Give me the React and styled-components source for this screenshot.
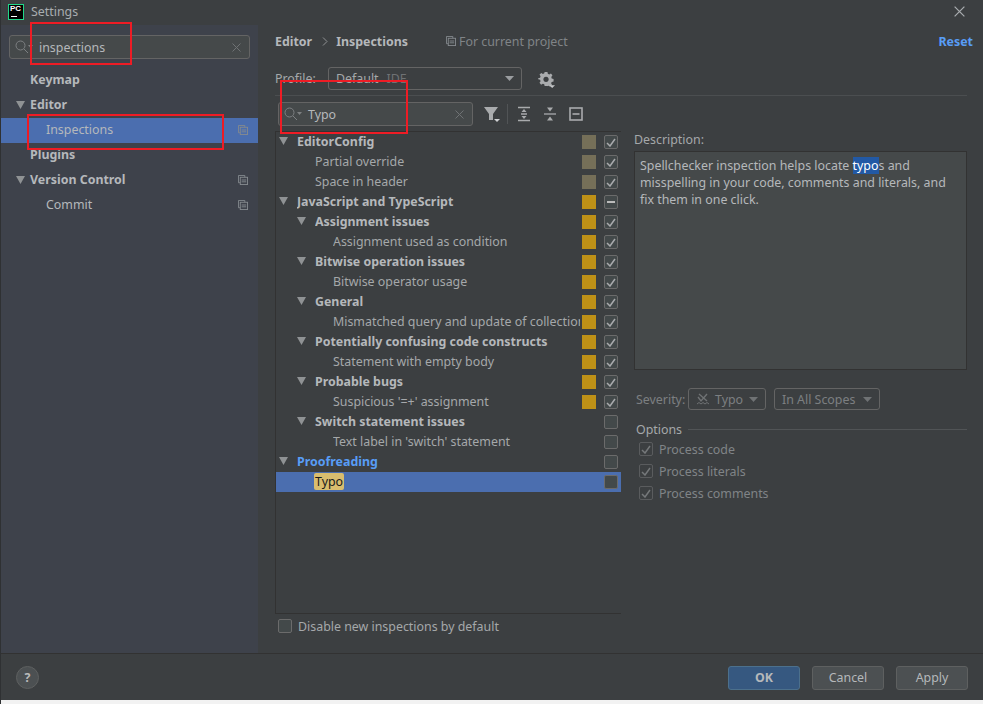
import React from 'react';
import styled, { createGlobalStyle } from 'styled-components';

const GlobalStyle = createGlobalStyle`
  html, body { margin: 0; padding: 0; background: #f2f2f2; }
  body { font-family: "Noto Sans", "Open Sans", sans-serif; font-size: 12.4px; color: #bbbbbb; }
  * { box-sizing: border-box; }
`;

const Window = styled.div`
  position: relative;
  width: 983px;
  height: 704px;
  overflow: hidden;
  display: flex;
  flex-direction: column;
  background: #f2f2f2;
  border-left: 1px solid #2f3133;
`;

const TitleBar = styled.div`
  height: 25px;
  flex: none;
  display: flex;
  align-items: center;
  padding: 0 18px 2px 7px;
  background: #3c3f41;
  color: #a9adb0;
`;

const Logo = styled.div`
  width: 16px;
  height: 16px;
  margin-right: 7px;
  background: #000;
  border: 1px solid #21d789;
  color: #fff;
  font: bold 8px/8px "Liberation Sans", sans-serif;
  padding-left: 1px;
  position: relative;
  &::after {
    content: '';
    position: absolute;
    left: 2px;
    bottom: 2px;
    width: 6px;
    height: 1px;
    background: #fff;
  }
`;

const TitleText = styled.span`
  flex: 1;
  padding-bottom: 1px;
`;

const Body = styled.div`
  height: 628px;
  flex: none;
  display: flex;
`;

const Sidebar = styled.div`
  width: 257px;
  flex: none;
  background: #3e424b;
  padding-top: 10px;
`;

const SearchBox = styled.div`
  height: 24px;
  display: flex;
  align-items: center;
  padding: 0 8px 0 5px;
  background: #45494a;
  border: 1px solid #646464;
  border-radius: 3px;
  width: ${p => p.$width}px;
  margin-left: ${p => p.$left}px;
`;

const SearchText = styled.span`
  flex: 1;
  margin-left: ${p => p.$gap}px;
  color: #b5b8bb;
`;

const NavList = styled.div`
  margin-top: 8.5px;
`;

const NavRow = styled.div`
  height: 25px;
  display: flex;
  align-items: center;
  padding-right: 10px;
  padding-left: ${p => 29 + p.$level * 16}px;
  position: relative;
  background: ${p => (p.$selected ? '#4b6eaf' : 'transparent')};
  font-weight: ${p => (p.$bold ? 700 : 400)};
  color: #b5b8bb;
`;

const NavLabel = styled.span`
  flex: 1;
  padding-bottom: 2px;
`;

const NavArrow = styled.svg`
  position: absolute;
  left: 15px;
  top: 8px;
  width: 9px;
  height: 8px;
`;

const Main = styled.div`
  flex: 1;
  min-width: 0;
  background: #3c3f41;
  padding: 4px 16px 0 17px;
  display: flex;
  flex-direction: column;
`;

const CrumbRow = styled.div`
  height: 24px;
  display: flex;
  align-items: center;
  margin-right: -6px;
`;

const Crumb = styled.span`
  font-weight: 700;
  color: #b5b8bb;
`;

const CrumbSep = styled.svg`
  width: 6px;
  height: 9px;
  margin: 0 8px 0 10px;
`;

const ProjectNote = styled.span`
  display: flex;
  align-items: center;
  gap: 3px;
  margin-left: 38px;
  color: #808487;
`;

const ResetLink = styled.span`
  margin-left: auto;
  font-weight: 700;
  color: #589df6;
`;

const ProfileRow = styled.div`
  margin-top: 14px;
  height: 29px;
  padding-bottom: 6px;
  display: flex;
  align-items: center;
  border-bottom: 1px solid #4b4e50;
`;

const ProfileLabel = styled.span`
  width: 53px;
  color: #a5a8aa;
`;

const Combo = styled.div`
  display: flex;
  align-items: center;
  justify-content: space-between;
  border: 1px solid #646464;
  border-radius: 3px;
  height: ${p => p.$height}px;
  width: ${p => p.$width}px;
  margin-left: ${p => p.$left || 0}px;
  padding: 0 7px;
  color: ${p => (p.$muted ? '#7c7f81' : '#a5a8aa')};
`;

const ComboValue = styled.span`
  display: flex;
  align-items: center;
  gap: 4px;
`;

const ComboHint = styled.span`
  color: #6f7274;
  margin-left: 4px;
`;

const GearIcon = styled.svg`
  width: 17px;
  height: 17px;
  margin-left: 16px;
  margin-top: 2px;
`;

const FilterRow = styled.div`
  margin-top: 6px;
  height: 24px;
  display: flex;
  align-items: center;
`;

const ToolIcon = styled.svg`
  width: 16px;
  height: 16px;
  flex: none;
  margin-left: ${p => p.$left}px;
`;

const ToolSep = styled.div`
  width: 1px;
  height: 20px;
  background: #515456;
  margin-left: 7px;
`;

const Split = styled.div`
  margin-top: 5px;
  height: 483px;
  display: flex;
  gap: 13px;
`;

const TreeBox = styled.div`
  width: 346px;
  flex: none;
  border: 1px solid #323232;
  border-right-width: 0;
`;

const TreeRow = styled.div`
  height: 20px;
  display: flex;
  align-items: center;
  position: relative;
  padding-right: 3px;
  padding-left: ${p => (p.$selected ? 20 : 21) + p.$level * 18}px;
  background: ${p => (p.$selected ? '#4b6eaf' : 'transparent')};
`;

const TreeArrow = styled.svg`
  position: absolute;
  left: ${p => 3 + p.$level * 18}px;
  top: 5px;
  width: 9px;
  height: 8px;
`;

const TreeLabel = styled.span`
  flex: 1;
  min-width: 0;
  margin-right: 2px;
  overflow: hidden;
  white-space: nowrap;
  padding-bottom: 2px;
  font-weight: ${p => (p.$bold ? 700 : 400)};
  color: ${p => (p.$blue ? '#589df6' : p.$bold ? '#b5b8bb' : '#a5a8aa')};
`;

const Match = styled.span`
  background: #d9bd6e;
  color: #1a1a1a;
  border-radius: 2px;
  padding: 0 1px;
`;

const Swatch = styled.span`
  width: 14px;
  height: 14px;
  flex: none;
  margin-right: 8px;
  background: ${p => p.$color};
`;

const CheckBox = styled.span`
  width: 14px;
  height: 14px;
  flex: none;
  display: flex;
  align-items: center;
  justify-content: center;
  border: 1px solid #6b6b6b;
  border-radius: 2px;
  background: #43494a;
`;

const DescPane = styled.div`
  flex: 1;
  min-width: 0;
  display: flex;
  flex-direction: column;
`;

const DescLabel = styled.div`
  height: 20px;
  line-height: 18px;
  color: #a5a8aa;
`;

const DescBox = styled.div`
  height: 219px;
  padding: 5px 15px 6px 5px;
  background: #45494a;
  border: 1px solid #323232;
  line-height: 17px;
  color: #b5b8bb;
`;

const Hit = styled.span`
  background: #2259a5;
  color: #fff;
`;

const SeverityRow = styled.div`
  margin-top: 18px;
  display: flex;
  align-items: center;
  color: #7c7f81;
  padding-left: 2px;
`;

const SeverityLabel = styled.span`
  width: 52px;
`;

const OptionsTitle = styled.div`
  margin-top: 10px;
  height: 18px;
  padding-top: 1px;
  display: flex;
  align-items: center;
  gap: 6px;
  padding-left: 2px;
  color: #a5a8aa;
  &::after {
    content: '';
    flex: 1;
    height: 1px;
    background: #515456;
  }
`;

const OptionRow = styled.div`
  height: 22px;
  display: flex;
  align-items: center;
  gap: 6px;
  padding-left: 5px;
  color: #808487;
`;

const FadedBox = styled(CheckBox)`
  background: transparent;
  border-color: #5a5c5e;
`;

const DisableRow = styled.div`
  margin-top: 4px;
  height: 16px;
  display: flex;
  align-items: center;
  gap: 6px;
  padding-left: 3px;
  color: #a5a8aa;
`;

const Footer = styled.div`
  height: 47px;
  flex: none;
  display: flex;
  align-items: center;
  gap: 12px;
  padding: 1px 15px 0;
  background: #3c3f41;
  border-top: 1px solid #323232;
`;

const HelpButton = styled.div`
  width: 23px;
  height: 23px;
  margin-right: auto;
  border-radius: 50%;
  display: flex;
  align-items: center;
  justify-content: center;
  background: #4c5052;
  border: 1px solid #5e6060;
  color: #bbbbbb;
  font-weight: 700;
`;

const FooterButton = styled.button`
  width: 72px;
  height: 24px;
  padding: 0;
  font: inherit;
  font-weight: ${p => (p.$primary ? 700 : 400)};
  color: #b5b8bb;
  border-radius: 3px;
  background: ${p => (p.$primary ? '#365880' : '#4c5052')};
  border: 1px solid ${p => (p.$primary ? '#4c708c' : '#5e6060')};
`;

const RedMark = styled.div`
  position: absolute;
  left: ${p => p.$x}px;
  top: ${p => p.$y}px;
  width: ${p => p.$w}px;
  height: ${p => p.$h}px;
  border: 2px solid #ee1c25;
  pointer-events: none;
`;

const DownArrow = ({ Comp = TreeArrow, level }) => (
  <Comp $level={level} viewBox="0 0 9 8">
    <path d="M0 0h9L4.5 8z" fill="#8f9294" />
  </Comp>
);

const Caret = ({ color = '#9a9da0' }) => (
  <svg width="9" height="5" viewBox="0 0 9 5">
    <path d="M0 0h9L4.5 5z" fill={color} />
  </svg>
);

const Tick = ({ color = '#a9abad' }) => (
  <svg width="10" height="9" viewBox="0 0 10 9">
    <path d="M1 5l3 3 5-7" fill="none" stroke={color} strokeWidth="1.5" />
  </svg>
);

const CopyIcon = () => (
  <svg width="10" height="10" viewBox="0 0 11 11" fill="none" stroke="#858a8e">
    <path d="M2.5 8.5h-2v-8h7v2" />
    <rect x="2.5" y="2.5" width="8" height="8" />
    <path d="M4 5.5h5M4 7.5h5" />
  </svg>
);

const SearchGlyph = () => (
  <svg width="18" height="14" viewBox="0 0 18 14" fill="none" stroke="#7d8082">
    <circle cx="5.5" cy="5.5" r="4.5" />
    <path d="M9 9l4 4" />
    <path d="M13 5h5l-2.5 3z" fill="#7d8082" stroke="none" />
  </svg>
);

const CloseGlyph = ({ size = 9, color = '#6f7274' }) => (
  <svg width={size} height={size} viewBox="0 0 9 9" stroke={color} fill="none">
    <path d="M0.5 0.5l8 8M8.5 0.5l-8 8" />
  </svg>
);

const navItems = [
  { label: 'Keymap', level: 0, bold: true },
  { label: 'Editor', level: 0, bold: true, open: true },
  { label: 'Inspections', level: 1, selected: true, copy: true },
  { label: 'Plugins', level: 0, bold: true },
  { label: 'Version Control', level: 0, bold: true, open: true, copy: true },
  { label: 'Commit', level: 1, copy: true },
];

const OLIVE = '#756f58';
const AMBER = '#be9117';

const treeItems = [
  { label: 'EditorConfig', level: 0, bold: true, swatch: OLIVE, check: 'on' },
  { label: 'Partial override', level: 1, swatch: OLIVE, check: 'on', leaf: true },
  { label: 'Space in header', level: 1, swatch: OLIVE, check: 'on', leaf: true },
  { label: 'JavaScript and TypeScript', level: 0, bold: true, swatch: AMBER, check: 'mixed' },
  { label: 'Assignment issues', level: 1, bold: true, swatch: AMBER, check: 'on' },
  { label: 'Assignment used as condition', level: 2, swatch: AMBER, check: 'on', leaf: true },
  { label: 'Bitwise operation issues', level: 1, bold: true, swatch: AMBER, check: 'on' },
  { label: 'Bitwise operator usage', level: 2, swatch: AMBER, check: 'on', leaf: true },
  { label: 'General', level: 1, bold: true, swatch: AMBER, check: 'on' },
  { label: 'Mismatched query and update of collections', level: 2, swatch: AMBER, check: 'on', leaf: true },
  { label: 'Potentially confusing code constructs', level: 1, bold: true, swatch: AMBER, check: 'on' },
  { label: 'Statement with empty body', level: 2, swatch: AMBER, check: 'on', leaf: true },
  { label: 'Probable bugs', level: 1, bold: true, swatch: AMBER, check: 'on' },
  { label: "Suspicious '=+' assignment", level: 2, swatch: AMBER, check: 'on', leaf: true },
  { label: 'Switch statement issues', level: 1, bold: true },
  { label: "Text label in 'switch' statement", level: 2, leaf: true },
  { label: 'Proofreading', level: 0, bold: true, blue: true },
  { label: 'Typo', level: 1, leaf: true, selected: true },
];

const options = ['Process code', 'Process literals', 'Process comments'];

export default function App() {
  return (
    <Window>
      <GlobalStyle />
      <TitleBar>
        <Logo>PC</Logo>
        <TitleText>Settings</TitleText>
        <CloseGlyph size={11} color="#a9adb0" />
      </TitleBar>

      <Body>
        <Sidebar>
          <SearchBox $width={241} $left={8}>
            <SearchGlyph />
            <SearchText $gap={6}>inspections</SearchText>
            <CloseGlyph />
          </SearchBox>
          <NavList>
            {navItems.map(item => (
              <NavRow key={item.label} $level={item.level} $bold={item.bold} $selected={item.selected}>
                {item.open && <DownArrow Comp={NavArrow} />}
                <NavLabel>{item.label}</NavLabel>
                {item.copy && <CopyIcon />}
              </NavRow>
            ))}
          </NavList>
        </Sidebar>

        <Main>
          <CrumbRow>
            <Crumb>Editor</Crumb>
            <CrumbSep viewBox="0 0 6 9">
              <path d="M1 0.5l4 4-4 4" fill="none" stroke="#8f9294" />
            </CrumbSep>
            <Crumb>Inspections</Crumb>
            <ProjectNote>
              <CopyIcon />
              For current project
            </ProjectNote>
            <ResetLink>Reset</ResetLink>
          </CrumbRow>

          <ProfileRow>
            <ProfileLabel>Profile:</ProfileLabel>
            <Combo $width={194} $height={23}>
              <ComboValue>
                Default<ComboHint>IDE</ComboHint>
              </ComboValue>
              <Caret />
            </Combo>
            <GearIcon viewBox="0 0 18 18">
              <path
                d="M7 1h3l.4 2 1.5.7 1.8-1.1 1.6 2-1.2 1.7.4 1.6 2 .6v2.6l-2 .5-.6 1.5 1 1.800-2 1.800-1.700-1.100-1.500.5L10 16H7l-.4-2-1.500-.6-1.800 1.100-1.700-2 1.100-1.700-.5-1.500-2-.5V7.700l2-.6.5-1.500-1.100-1.800 1.900-1.800 1.700 1.100 1.500-.6z M8.500 6a2.800 2.800 0 1 0 0.010 0z"
                fill="#a9abad"
                fillRule="evenodd"
              />
              <path d="M12 15h6l-3 3z" fill="#c5c7c9" />
            </GearIcon>
          </ProfileRow>

          <FilterRow>
            <SearchBox $width={195} $left={3}>
              <SearchGlyph />
              <SearchText $gap={6}>Typo</SearchText>
              <CloseGlyph />
            </SearchBox>
            <ToolIcon $left={11} viewBox="0 0 16 16">
              <path d="M0 1h14L9 8v6l-4 0V8z" fill="#a9abad" />
              <path d="M10 13h6l-3 3z" fill="#d0d2d4" />
            </ToolIcon>
            <ToolSep />
            <ToolIcon $left={8} viewBox="0 0 16 16" fill="none" stroke="#a9abad" strokeWidth="1.3">
              <path d="M2 1.500h12M2 14.500h12M5 8h6" />
              <path d="M8 3l2.500 3h-5zM8 13l2.500-3h-5z" fill="#a9abad" stroke="none" />
            </ToolIcon>
            <ToolIcon $left={10} viewBox="0 0 16 16" fill="none" stroke="#a9abad" strokeWidth="1.3">
              <path d="M2 8h12" />
              <path d="M5 1.500h6l-3 4zM5 14.500h6l-3-4z" fill="#a9abad" stroke="none" />
            </ToolIcon>
            <ToolIcon $left={10} viewBox="0 0 16 16" fill="none" stroke="#a9abad" strokeWidth="1.6">
              <rect x="2" y="2" width="12" height="12" />
              <path d="M4.500 8h7" />
            </ToolIcon>
          </FilterRow>

          <Split>
            <TreeBox>
              {treeItems.map(item => (
                <TreeRow key={item.label} $level={item.level} $selected={item.selected}>
                  {!item.leaf && <DownArrow level={item.level} />}
                  <TreeLabel $bold={item.bold} $blue={item.blue}>
                    {item.selected ? <Match>{item.label}</Match> : item.label}
                  </TreeLabel>
                  {item.swatch && <Swatch $color={item.swatch} />}
                  <CheckBox>
                    {item.check === 'on' && <Tick />}
                    {item.check === 'mixed' && (
                      <svg width="8" height="2"><rect width="8" height="2" fill="#bbbbbb" /></svg>
                    )}
                  </CheckBox>
                </TreeRow>
              ))}
            </TreeBox>

            <DescPane>
              <DescLabel>Description:</DescLabel>
              <DescBox>
                Spellchecker inspection helps locate <Hit>typo</Hit>s and misspelling in your code, comments and
                literals, and fix them in one click.
              </DescBox>
              <SeverityRow>
                <SeverityLabel>Severity:</SeverityLabel>
                <Combo $width={78} $height={22} $muted>
                  <ComboValue>
                    <svg width="15" height="13" viewBox="0 0 15 13" fill="none" stroke="#6f7274">
                      <path d="M2 4l3 4 6-7M3 1l8 7" strokeWidth="1.4" />
                      <path d="M1 11l2-1.500 2 1.500 2-1.500 2 1.500 2-1.500 2 1.500" />
                    </svg>
                    Typo
                  </ComboValue>
                  <Caret color="#6f7274" />
                </Combo>
                <Combo $width={106} $height={22} $left={8} $muted>
                  In All Scopes
                  <Caret color="#6f7274" />
                </Combo>
              </SeverityRow>
              <OptionsTitle>Options</OptionsTitle>
              {options.map(option => (
                <OptionRow key={option}>
                  <FadedBox>
                    <Tick color="#75787a" />
                  </FadedBox>
                  {option}
                </OptionRow>
              ))}
            </DescPane>
          </Split>

          <DisableRow>
            <CheckBox />
            Disable new inspections by default
          </DisableRow>
        </Main>
      </Body>

      <Footer>
        <HelpButton>?</HelpButton>
        <FooterButton $primary>OK</FooterButton>
        <FooterButton>Cancel</FooterButton>
        <FooterButton>Apply</FooterButton>
      </Footer>

      <RedMark $x={29} $y={22} $w={102} $h={43} />
      <RedMark $x={26} $y={114} $w={197} $h={36} />
      <RedMark $x={279} $y={80} $w={128} $h={54} />
    </Window>
  );
}
